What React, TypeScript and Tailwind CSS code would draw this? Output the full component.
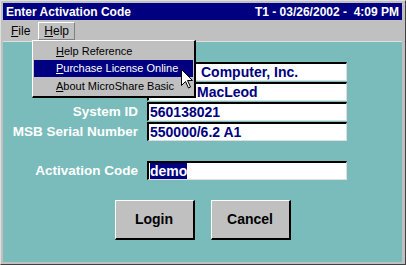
import React from "react";

const sans = { fontFamily: '"Liberation Sans", Arial, sans-serif' };

// the first two rows sit under the open Help menu, so only the visible tail of the value is drawn
const Field = ({ value, selected, indent = 0 }: { value: string; selected?: boolean; indent?: number }) => (
  <div
    className="h-[19px] w-[200px] bg-white border-t-2 border-l-2 border-t-black border-l-black border-b border-r border-b-[#dfdfdf] border-r-[#dfdfdf] pl-[1px] text-[14px] leading-[16px] font-bold text-[#000080] whitespace-nowrap overflow-hidden"
    style={indent ? { paddingLeft: indent } : undefined}
  >
    {selected ? <span className="bg-[#000080] text-white">{value}</span> : value}
  </div>
);

const Label = ({ children }: { children?: React.ReactNode }) => (
  <div className="h-[19px] text-right text-[13.5px] leading-[19px] font-bold text-white whitespace-nowrap">{children}</div>
);

const Button = ({ children }: { children: React.ReactNode }) => (
  <button className="w-[80px] h-[40px] bg-[#c0c0c0] border-t border-l border-white border-b-2 border-r-2 border-b-black border-r-black text-[14px] font-bold text-black">
    {children}
  </button>
);

export default function App() {
  const rows: { label: string; value: string; indent?: number }[] = [
    { label: "", value: "Computer, Inc.", indent: 52 },
    { label: "", value: "MacLeod", indent: 48 },
    { label: "System ID", value: "560138021" },
    { label: "MSB Serial Number", value: "550000/6.2 A1" },
  ];

  return (
    <div style={sans} className="relative w-[406px] h-[265px] bg-[#c0c0c0] border-t border-l border-[#dfdfdf] border-b border-r border-b-[#404040] border-r-[#404040] flex flex-col p-[2px] pr-[3px] pb-[2px] select-none">
      {/* title bar */}
      <div className="h-[17px] bg-[#000080] flex items-center justify-between px-[3px] text-white text-[12px] font-bold whitespace-pre">
        <span>Enter Activation Code</span>
        <span>T1 - 03/26/2002 -  4:09 PM</span>
      </div>

      {/* menu bar */}
      <div className="h-[21px] flex items-center text-[12px] text-black pl-[5px]">
        <span className="px-[3px]">
          <u>F</u>ile
        </span>
        <span className="ml-[5px] h-[18px] px-[5px] flex items-center border-t border-l border-white border-b border-r border-b-[#808080] border-r-[#808080]">
          <u>H</u>elp
        </span>
      </div>

      {/* client area */}
      <div className="flex-1 bg-[#7abcbc] border-t border-[#dfdfdf] flex flex-col items-center pt-[20px]">
        <div className="grid grid-cols-[135px_200px] gap-x-[9px] gap-y-[1px] self-start">
          {rows.map((r, i) => (
            <React.Fragment key={i}>
              <Label>{r.label}</Label>
              <Field value={r.value} indent={r.indent} />
            </React.Fragment>
          ))}
        </div>
        <div className="grid grid-cols-[135px_200px] gap-x-[9px] self-start mt-[20px]">
          <Label>Activation Code</Label>
          <Field value="demo" selected />
        </div>
        <div className="flex gap-[16px] mt-[20px]">
          <Button>Login</Button>
          <Button>Cancel</Button>
        </div>
      </div>

      {/* Help dropdown */}
      <div className="absolute left-[31px] top-[39px] w-[164px] bg-[#c0c0c0] border-t border-l border-white border-b-2 border-r-2 border-b-black border-r-black p-[1px] text-[11px] text-black">
        <div className="h-[18px] flex items-center pl-[22px]">
          <span>
            <u>H</u>elp Reference
          </span>
        </div>
        <div className="h-[17px] flex items-center pl-[22px] bg-[#000080] text-white">
          <span>
            <u>P</u>urchase License Online
          </span>
        </div>
        <div className="h-[18px] flex items-center pl-[22px]">
          <span>
            <u>A</u>bout MicroShare Basic
          </span>
        </div>
      </div>

      {/* mouse cursor */}
      <svg className="absolute left-[180px] top-[68px]" width="12" height="20" viewBox="0 0 12 20">
        <path d="M0.5 0.5 L0.5 16.5 L4.5 12.5 L7.5 19 L9.5 18 L6.5 11.5 L11.5 11.5 Z" fill="white" stroke="black" strokeWidth="1" />
      </svg>
    </div>
  );
}
